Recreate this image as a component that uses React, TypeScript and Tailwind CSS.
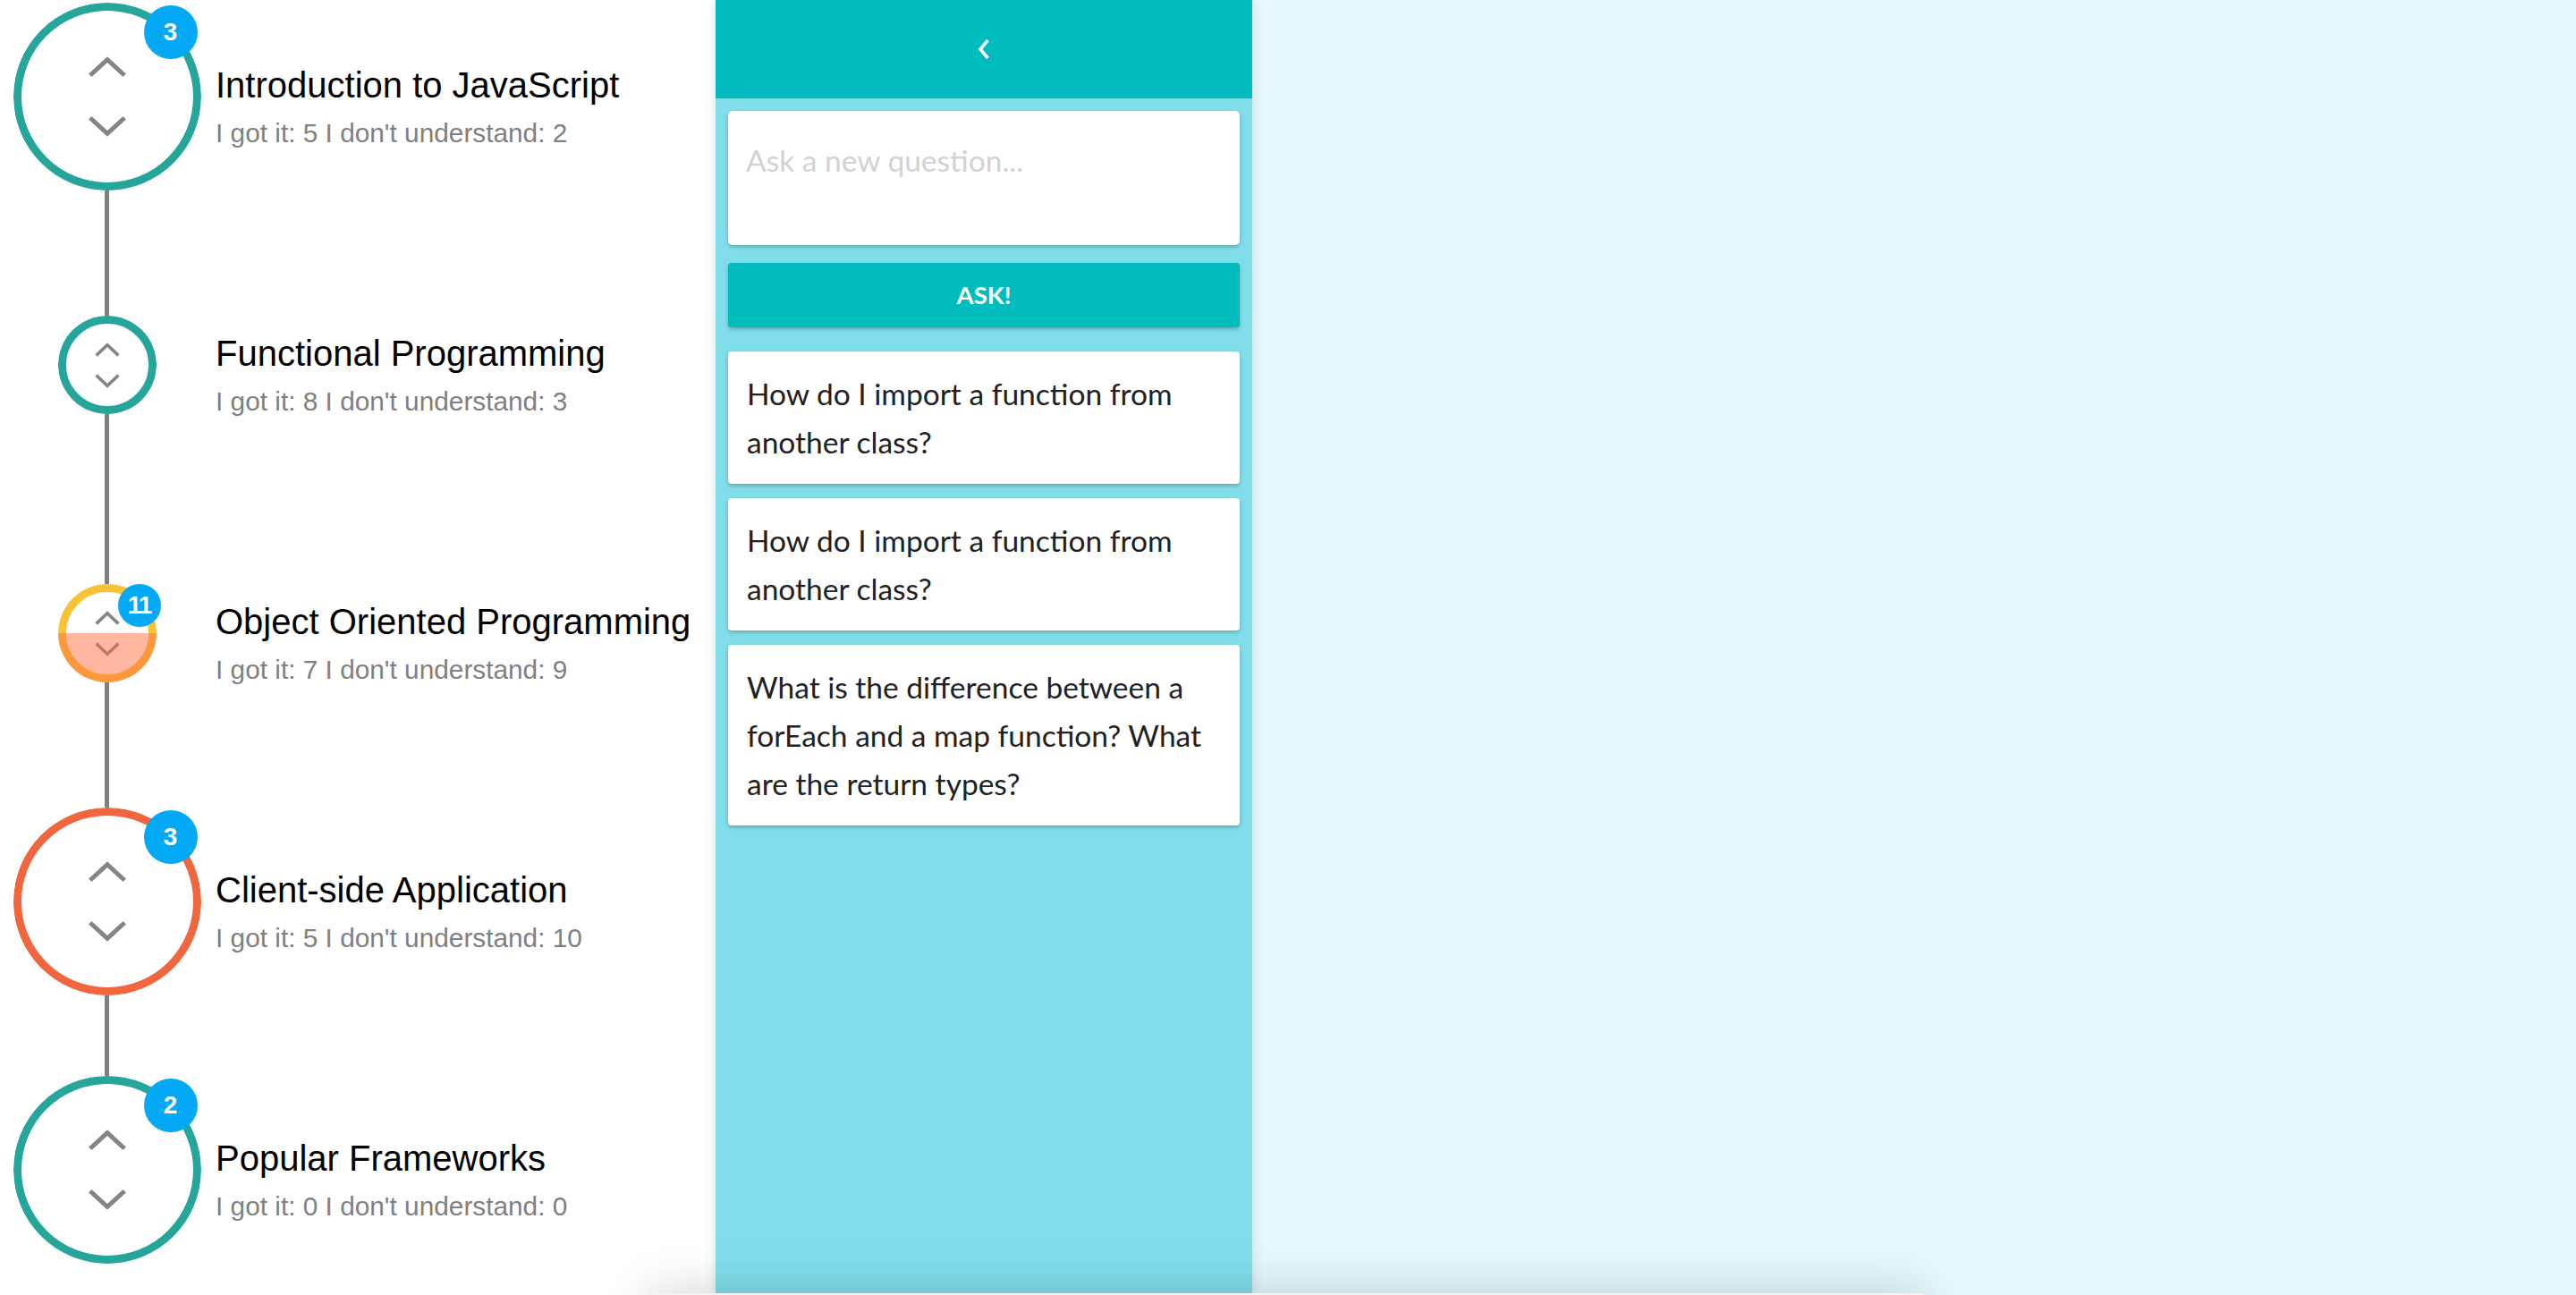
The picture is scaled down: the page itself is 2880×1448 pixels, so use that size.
import React from 'react';

type Topic = {
  title: string;
  got: number;
  lost: number;
  questions: number;
  big: boolean;
  ring: string;
  fill?: boolean;
};

const topics: Topic[] = [
  { title: 'Introduction to JavaScript', got: 5, lost: 2, questions: 3, big: true, ring: 'border-[#26a69a]' },
  { title: 'Functional Programming', got: 8, lost: 3, questions: 0, big: false, ring: 'border-[#26a69a]' },
  { title: 'Object Oriented Programming', got: 7, lost: 9, questions: 11, big: false, ring: 'border-[#f8c236]', fill: true },
  { title: 'Client-side Application', got: 5, lost: 10, questions: 3, big: true, ring: 'border-[#f0673f]' },
  { title: 'Popular Frameworks', got: 0, lost: 0, questions: 2, big: true, ring: 'border-[#26a69a]' },
];

const questions = [
  'How do I import a function from another class?',
  'How do I import a function from another class?',
  'What is the difference between a forEach and a map function? What are the return types?',
];

function Chevron({ up, big }: { up: boolean; big: boolean }) {
  const w = big ? 46 : 30;
  const h = big ? 25 : 17;
  const s = big ? 5 : 3.5;
  const m = s * 0.75;
  const points = up
    ? `${m},${h - m} ${w / 2},${m} ${w - m},${h - m}`
    : `${m},${m} ${w / 2},${h - m} ${w - m},${m}`;
  return (
    <svg width={w} height={h} viewBox={`0 0 ${w} ${h}`} className="block">
      <polyline points={points} fill="none" stroke="#858585" strokeWidth={s} />
    </svg>
  );
}

function Node({ topic }: { topic: Topic }) {
  const { big } = topic;
  return (
    <div className={`relative shrink-0 ${big ? 'w-[210px] h-[210px]' : 'w-[110px] h-[110px]'}`}>
      <div className="relative w-full h-full rounded-full overflow-hidden">
        <div
          className={`w-full h-full rounded-full bg-white border-[9px] ${topic.ring} flex flex-col items-center justify-center ${big ? 'gap-[40px]' : 'gap-[17px]'}`}
        >
          <Chevron up big={big} />
          <Chevron up={false} big={big} />
        </div>
        {topic.fill && <div className="absolute inset-x-0 bottom-0 h-1/2 bg-[#ff6f43]/50" />}
      </div>
      {topic.questions > 0 && (
        <div
          className={`absolute rounded-full bg-[#03a9f4] text-white font-bold flex items-center justify-center text-[28px] leading-none ${
            big ? 'left-[146px] top-[3px] w-[60px] h-[60px]' : 'left-[67px] top-0 w-[48px] h-[48px] tracking-[-2px]'
          }`}
        >
          {topic.questions}
        </div>
      )}
    </div>
  );
}

function Timeline() {
  return (
    <div className="w-[800px] shrink-0 h-full bg-white overflow-hidden font-['Liberation_Sans',Arial,sans-serif]">
      <div className="-mt-[42px] flex flex-col">
        {topics.map((topic, i) => (
          <div key={i} className="flex h-[300px]">
            <div className="w-[239px] shrink-0 flex flex-col items-center">
              <div className={`w-[5px] flex-1 ${i === 0 ? '' : 'bg-[#808080]'}`} />
              <Node topic={topic} />
              <div className={`w-[5px] flex-1 ${i === topics.length - 1 ? '' : 'bg-[#808080]'}`} />
            </div>
            <div className="pl-[2px] pt-[114px]">
              <div className="text-[40px] leading-[46px] text-black whitespace-nowrap">{topic.title}</div>
              <div className="mt-[14px] text-[29.8px] leading-[34px] text-[#808080] whitespace-nowrap">
                I got it: {topic.got} I don't understand: {topic.lost}
              </div>
            </div>
          </div>
        ))}
      </div>
    </div>
  );
}

function QuestionPanel() {
  return (
    <div className="relative z-10 w-[600px] shrink-0 h-full bg-[#80deea] shadow-[0_0_12px_rgba(0,0,0,0.12)] flex flex-col font-['Lato','Open_Sans',sans-serif]">
      <div className="h-[110px] bg-[#00bcbc] flex items-center justify-center">
        <svg width="14" height="24" viewBox="0 0 14 24" className="block">
          <polyline points="11.5,2 3,12 11.5,22" fill="none" stroke="white" strokeWidth="3.5" />
        </svg>
      </div>
      <div className="px-[14px] pt-[14px] flex flex-col">
        <div className="h-[150px] bg-white rounded-[5px] shadow-[0_2px_4px_rgba(0,0,0,0.25)] overflow-hidden">
          <textarea
            className="w-full h-full resize-none outline-none bg-transparent px-[20px] pt-[28px] text-[33.5px] leading-[54px] text-[#212121] placeholder:text-[#d2d2d2]"
            placeholder="Ask a new question..."
          />
        </div>
        <button className="mt-[20px] h-[72px] rounded-[4px] bg-[#00bcbc] text-white font-bold text-[27.5px] shadow-[0_2px_4px_rgba(0,0,0,0.25)]">
          ASK!
        </button>
        <div className="mt-[27px] flex flex-col gap-[16px]">
          {questions.map((q, i) => (
            <div
              key={i}
              className="bg-white rounded-[4px] shadow-[0_2px_4px_rgba(0,0,0,0.25)] pl-[21px] pr-[10px] py-[20px] text-[33.5px] leading-[54px] text-[#212121]"
            >
              {q}
            </div>
          ))}
        </div>
      </div>
    </div>
  );
}

export default function App() {
  return (
    <div className="relative flex h-screen w-full overflow-hidden bg-white">
      <Timeline />
      <QuestionPanel />
      <div className="flex-1 h-full bg-[#e5f9fd]" />
      {/* sheet sitting just below the fold, only its shadow shows */}
      <div className="fixed left-[727px] top-[1446px] z-20 w-[1424px] h-[200px] bg-[#f4f4f4] shadow-[0_-4px_50px_rgba(0,0,0,0.16)]" />
    </div>
  );
}
